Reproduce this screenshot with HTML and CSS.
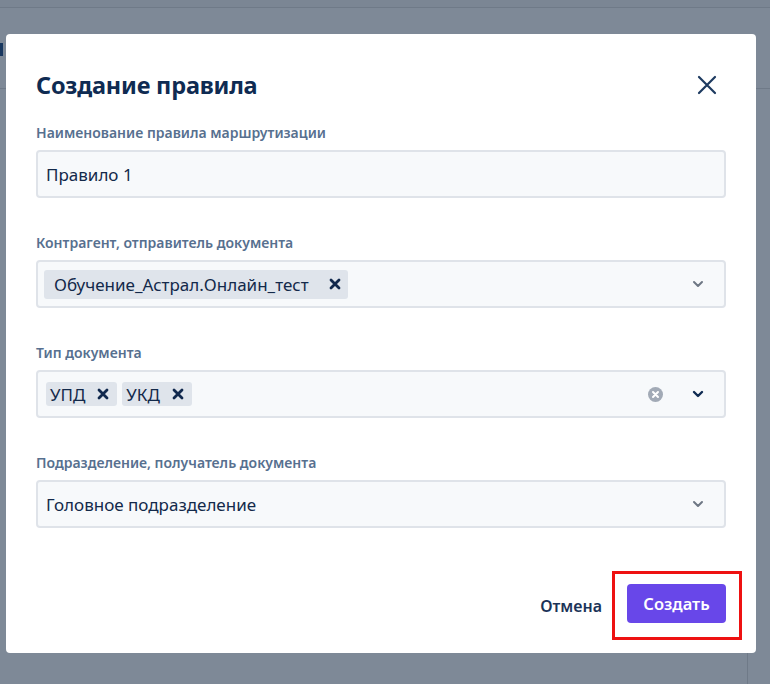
FILE: index.html
```html
<!DOCTYPE html>
<html lang="ru">
<head>
  <meta charset="UTF-8">
  <title>Создание правила</title>
  <link rel="stylesheet" href="styles.css">
</head>
<body>
  <!-- Page behind the overlay -->
  <div class="page">
    <div class="topbar"></div>
    <div class="header"><span class="header-mark"></span></div>
    <div class="content"><span class="scroll-edge"></span></div>
  </div>

  <!-- Dialog -->
  <div class="modal">
    <div class="modal-head">
      <h2 class="modal-title">Создание правила</h2>
      <button class="close-btn" aria-label="Закрыть">
        <svg width="20" height="20" viewBox="0 0 20 20">
          <path d="M2 2 L18 18 M18 2 L2 18" stroke="#1d3a60" stroke-width="2.2" stroke-linecap="round"/>
        </svg>
      </button>
    </div>

    <div class="field">
      <label class="field-label">Наименование правила маршрутизации</label>
      <div class="input-box">
        <span class="value">Правило 1</span>
      </div>
    </div>

    <div class="field">
      <label class="field-label">Контрагент, отправитель документа</label>
      <div class="input-box select">
        <div class="chips">
          <span class="chip chip-lg">Обучение_Астрал.Онлайн_тест
            <svg class="chip-x" width="12" height="12" viewBox="0 0 12 12"><path d="M2 2 L10 10 M10 2 L2 10" stroke="#10284d" stroke-width="2.8" stroke-linecap="round"/></svg>
          </span>
        </div>
        <svg class="chevron" width="12" height="8" viewBox="0 0 12 8"><path d="M2 2 L6 6 L10 2" fill="none" stroke="#6e7784" stroke-width="2" stroke-linecap="round" stroke-linejoin="round"/></svg>
      </div>
    </div>

    <div class="field">
      <label class="field-label">Тип документа</label>
      <div class="input-box select">
        <div class="chips">
          <span class="chip">УПД
            <svg class="chip-x" width="12" height="12" viewBox="0 0 12 12"><path d="M2 2 L10 10 M10 2 L2 10" stroke="#10284d" stroke-width="2.8" stroke-linecap="round"/></svg>
          </span>
          <span class="chip">УКД
            <svg class="chip-x" width="12" height="12" viewBox="0 0 12 12"><path d="M2 2 L10 10 M10 2 L2 10" stroke="#10284d" stroke-width="2.8" stroke-linecap="round"/></svg>
          </span>
        </div>
        <svg class="clear-icon" width="15" height="15" viewBox="0 0 15 15">
          <circle cx="7.5" cy="7.5" r="7.5" fill="#a2aab6"/>
          <path d="M5 5 L10 10 M10 5 L5 10" stroke="#fff" stroke-width="2" stroke-linecap="round"/>
        </svg>
        <svg class="chevron" width="12" height="8" viewBox="0 0 12 8"><path d="M2 2 L6 6 L10 2" fill="none" stroke="#0f2b52" stroke-width="2.4" stroke-linecap="round" stroke-linejoin="round"/></svg>
      </div>
    </div>

    <div class="field">
      <label class="field-label">Подразделение, получатель документа</label>
      <div class="input-box select">
        <span class="value">Головное подразделение</span>
        <svg class="chevron" width="12" height="8" viewBox="0 0 12 8"><path d="M2 2 L6 6 L10 2" fill="none" stroke="#6e7784" stroke-width="2" stroke-linecap="round" stroke-linejoin="round"/></svg>
      </div>
    </div>

    <div class="modal-foot">
      <button class="btn-cancel">Отмена</button>
      <div class="highlight">
        <button class="btn-primary">Создать</button>
      </div>
    </div>
  </div>
</body>
</html>
```

FILE: styles.css
```css
body {
  margin: 0;
  font-family: "Noto Sans", "Open Sans", sans-serif;
  background: #7e8997;
  width: 770px;
  height: 684px;
  overflow: hidden;
  position: relative;
}

/* Background page, dimmed by the overlay */
.page {
  display: flex;
  flex-direction: column;
  height: 684px;
}
.topbar {
  height: 7px;
  border-bottom: 1px solid #6f7a88;
  background: #7b8694;
}
.header {
  height: 80px;
  border-bottom: 1px solid #6f7a88;
  position: relative;
}
.header-mark {
  position: absolute;
  left: 0;
  top: 35px;
  width: 3px;
  height: 13px;
  background: #18375f;
}
.content {
  flex: 1;
  position: relative;
}
.scroll-edge {
  position: absolute;
  left: 747px;
  top: 0;
  bottom: 0;
  width: 1px;
  background: #6f7a88;
}

/* Dialog */
.modal {
  position: absolute;
  left: 6px;
  top: 34px;
  width: 750px;
  height: 619px;
  box-sizing: border-box;
  padding: 36px 30px 0 30px;
  background: #fff;
  border-radius: 4px;
  display: flex;
  flex-direction: column;
}
.modal-head {
  display: flex;
  align-items: center;
  justify-content: space-between;
  height: 30px;
  margin-bottom: 24px;
}
.modal-title {
  margin: 0;
  font-size: 23.5px;
  font-weight: 700;
  color: #0f2b52;
  letter-spacing: -0.2px;
}
.close-btn {
  border: none;
  background: none;
  padding: 0;
  margin-right: 9px;
  display: flex;
}

.field {
  display: flex;
  flex-direction: column;
  margin-bottom: 36px;
}
.field-label {
  font-size: 14px;
  line-height: 18px;
  font-weight: 600;
  color: #57708f;
  margin-bottom: 8px;
}
.input-box {
  height: 48px;
  box-sizing: border-box;
  border: 2px solid #dfe3e9;
  border-radius: 4px;
  background: #f7f9fb;
  display: flex;
  align-items: center;
  padding: 0 8px;
}
.value {
  font-size: 17px;
  color: #13294a;
}
.select .value {
  flex: 1;
}
.chips {
  flex: 1;
  display: flex;
  gap: 5px;
}
.chip {
  display: inline-flex;
  align-items: center;
  gap: 12px;
  height: 24px;
  padding: 0 8px 0 4px;
  background: #dfe4eb;
  border-radius: 3px;
  font-size: 17px;
  color: #13294a;
}
.chip-lg {
  height: 29px;
  padding: 0 7px 0 10px;
  margin-left: -2px;
  gap: 20px;
}
.chip-x {
  flex: none;
}
.clear-icon {
  margin-right: 29px;
}
.chevron {
  margin-right: 12px;
}

.modal-foot {
  margin-top: auto;
  display: flex;
  align-items: center;
  justify-content: flex-end;
  gap: 10px;
  padding-bottom: 13px;
  margin-right: -16px;
}
.btn-cancel {
  border: none;
  background: none;
  font-family: inherit;
  font-size: 16px;
  font-weight: 600;
  color: #1b3358;
  padding: 0;
}
.highlight {
  border: 3px solid #ee1111;
  padding: 10px 13px 14px 12px;
}
.btn-primary {
  border: none;
  border-radius: 4px;
  background: #6847e9;
  color: #fff;
  font-family: inherit;
  font-size: 16.5px;
  font-weight: 600;
  width: 99px;
  height: 39px;
}
```
